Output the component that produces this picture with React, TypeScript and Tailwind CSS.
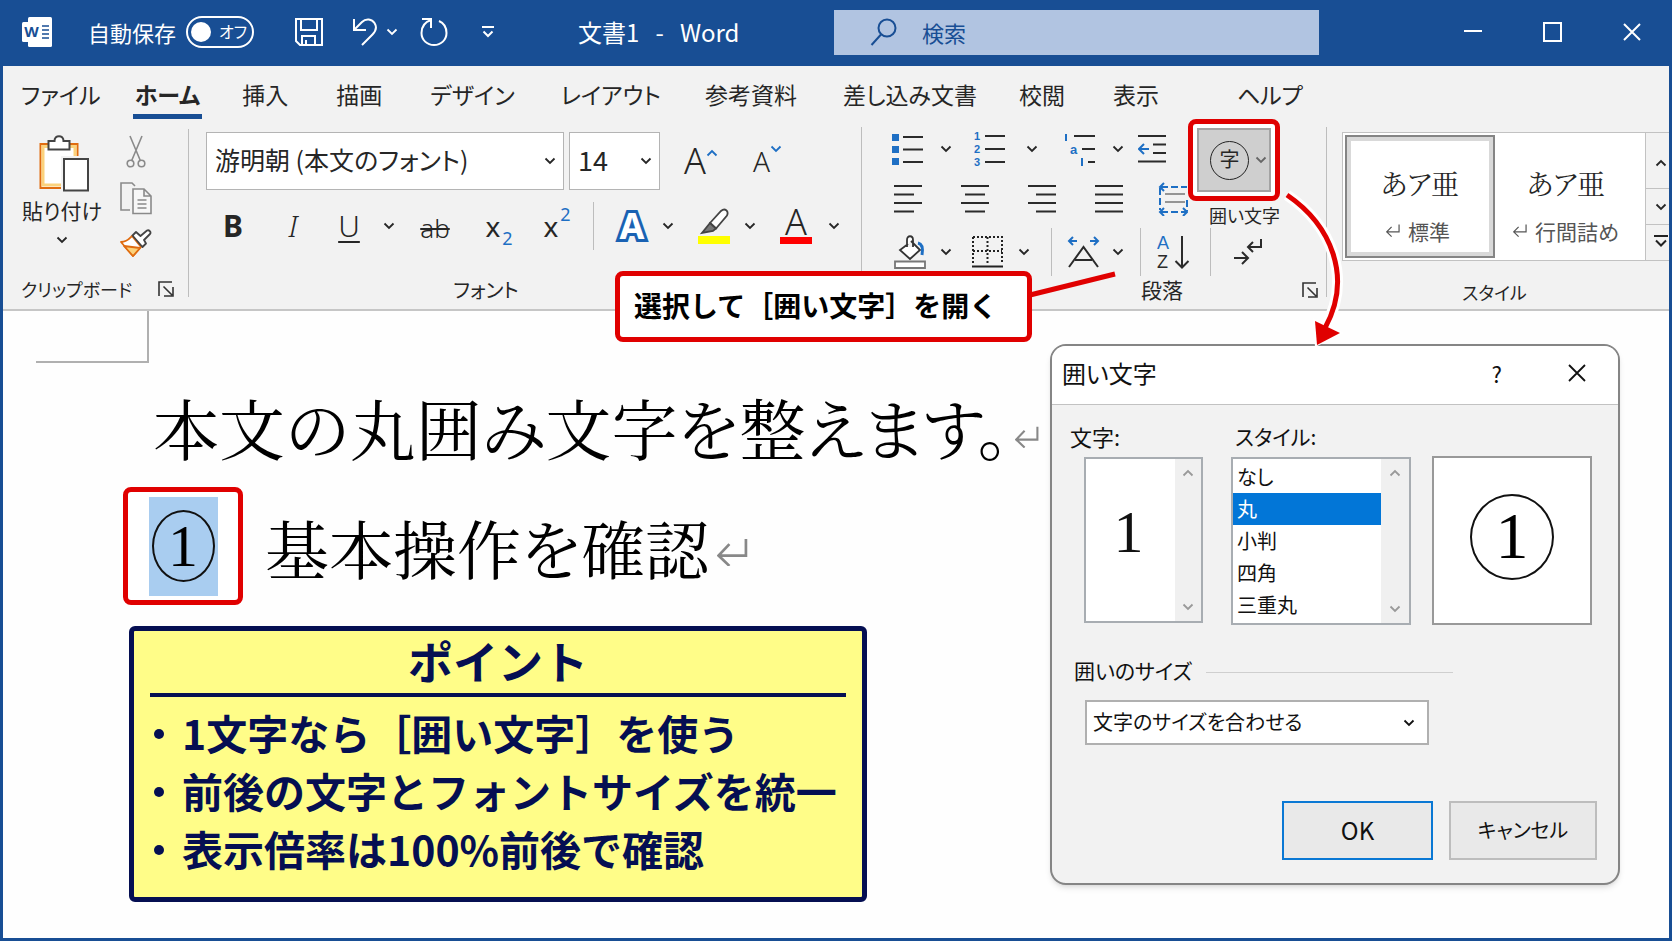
import { useState } from "react";
import type { ReactNode } from "react";

const TABS = [
  { label: "ファイル", gap: "ml-[18px]" },
  { label: "ホーム", gap: "ml-8" },
  { label: "挿入", gap: "ml-10" },
  { label: "描画", gap: "ml-12" },
  { label: "デザイン", gap: "ml-12" },
  { label: "レイアウト", gap: "ml-[46px]" },
  { label: "参考資料", gap: "ml-11" },
  { label: "差し込み文書", gap: "ml-[46px]" },
  { label: "校閲", gap: "ml-[42px]" },
  { label: "表示", gap: "ml-12" },
  { label: "ヘルプ", gap: "ml-[78px]" },
];

const STYLES = ["なし", "丸", "小判", "四角", "三重丸"];

const POINTS = ["1文字なら［囲い文字］を使う", "前後の文字とフォントサイズを統一", "表示倍率は100%前後で確認"];

function Chevron({ up = false, className = "" }: { up?: boolean; className?: string }) {
  return (
    <svg width="12" height="8" viewBox="0 0 12 8" fill="none" stroke="currentColor" strokeWidth="1.8" className={`shrink-0 ${className}`}>
      <path d={up ? "M1.5 6.5 6 2l4.5 4.5" : "M1.5 1.5 6 6l4.5-4.5"} />
    </svg>
  );
}

function ReturnMark({ className = "" }: { className?: string }) {
  return (
    <svg viewBox="0 0 30 28" fill="none" stroke="currentColor" strokeWidth="2.6" className={`shrink-0 ${className}`}>
      <path d="M28 1v16H2M12 6 1.5 17 12 27" />
    </svg>
  );
}

function Launcher() {
  return (
    <button aria-label="詳細設定">
      <svg width="16" height="16" viewBox="0 0 16 16" fill="none" stroke="#333" strokeWidth="1.6">
        <path d="M1 15V1h13M5.5 5.5 14 14M15 6v9H6" />
      </svg>
    </button>
  );
}

function Tool({ label, className = "", children }: { label: string; className?: string; children: ReactNode }) {
  return (
    <button aria-label={label} className={`flex shrink-0 items-center justify-center ${className}`}>
      {children}
    </button>
  );
}

function Separator({ className = "" }: { className?: string }) {
  return <div className={`w-px shrink-0 bg-[#bdbdbd] ${className}`} />;
}

function Lines({ rows }: { rows: [number, number][] }) {
  return (
    <svg width="30" height="30" viewBox="0 0 30 30" stroke="#2b2b2b" strokeWidth="2">
      {rows.map(([from, to], i) => (
        <path key={i} d={`M${from} ${2 + i * 8.5}H${to}`} />
      ))}
    </svg>
  );
}

function TitleBar() {
  return (
    <header className="flex h-[66px] items-center bg-[#184e94] pr-7 pb-0.5 pl-[19px] text-white">
      <svg width="30" height="32" viewBox="0 0 30 32" className="shrink-0">
        <rect x="6" y="1" width="24" height="30" rx="1.5" fill="#fff" />
        <rect x="0" y="6" width="18" height="20" rx="1.5" fill="#fff" />
        <path d="M20 10h7M20 14h7M20 18h7M20 22h7" stroke="#184e94" strokeWidth="1.6" />
        <text x="9.5" y="21" textAnchor="middle" fontSize="15" fontWeight="700" fontFamily="Noto Sans, sans-serif" fill="#184e94">W</text>
      </svg>
      <span className="ml-9 text-[22px] whitespace-nowrap">自動保存</span>
      <button role="switch" aria-checked="false" aria-label="自動保存" className="ml-2.5 flex h-8 w-[68px] shrink-0 items-center rounded-full border-2 border-white pl-[3px]">
        <span className="size-5 rounded-full bg-white" />
        <span className="ml-2 pb-0.5 text-base leading-none">オフ</span>
      </button>
      <Tool label="上書き保存" className="ml-10">
        <svg width="30" height="30" viewBox="0 0 30 30" fill="none" stroke="#fff" strokeWidth="2">
          <path d="M2 2h26v26H6l-4-4zM7 2v11h16V2M8 28v-9h13v9M12 28v-5" />
        </svg>
      </Tool>
      <Tool label="元に戻す" className="ml-7">
        <svg width="26" height="30" viewBox="0 0 26 30" fill="none" stroke="#fff" strokeWidth="2">
          <path d="M2 2v11h12M2 13 10 5c4-4 10-3 12.5 1s1.5 8-2 11.5L10 28" />
        </svg>
      </Tool>
      <Chevron className="ml-2" />
      <Tool label="やり直し" className="ml-[22px]">
        <svg width="28" height="30" viewBox="0 0 28 30" fill="none" stroke="#fff" strokeWidth="2">
          <path d="M2 2h9v9M11 3C5 5 1.5 10 1.5 16c0 7 5.5 12 12.5 12s12.5-5 12.5-12c0-5.5-3-10-7.5-12" />
        </svg>
      </Tool>
      <Tool label="クイック アクセス ツール バーのカスタマイズ" className="ml-8">
        <svg width="16" height="14" viewBox="0 0 16 14" fill="none" stroke="#fff" strokeWidth="2">
          <path d="M2 2h12M3.5 6.5 8 11l4.5-4.5" />
        </svg>
      </Tool>
      <h1 className="ml-[82px] w-[256px] shrink-0 text-2xl whitespace-pre">文書1   -   Word</h1>
      <label className="flex h-[45px] w-[485px] items-center bg-[#b1c4e1] pl-9 text-[#184e94]">
        <svg width="27" height="28" viewBox="0 0 27 28" fill="none" stroke="#184e94" strokeWidth="2">
          <circle cx="17" cy="10" r="8.5" />
          <path d="M11 16.5 1.5 27" />
        </svg>
        <input aria-label="検索" placeholder="検索" className="ml-[25px] min-w-0 flex-1 bg-transparent text-[22px] outline-none placeholder:text-[#184e94]" />
      </label>
      <div className="ml-auto flex items-center gap-[61px]">
        <Tool label="最小化">
          <svg width="18" height="18" viewBox="0 0 18 18" stroke="#fff" strokeWidth="2"><path d="M0 8h18" /></svg>
        </Tool>
        <Tool label="最大化">
          <svg width="19" height="20" viewBox="0 0 19 20" fill="none" stroke="#fff" strokeWidth="2"><path d="M1 1h17v18H1z" /></svg>
        </Tool>
        <Tool label="閉じる">
          <svg width="18" height="18" viewBox="0 0 18 18" stroke="#fff" strokeWidth="2"><path d="m1 1 16 16M17 1 1 17" /></svg>
        </Tool>
      </div>
    </header>
  );
}

function ClipboardGroup() {
  return (
    <section className="flex w-[185px] shrink-0 flex-col justify-between pt-3 pb-[5px]">
      <div className="flex pl-[19px]">
        <button className="flex w-20 flex-col items-center whitespace-nowrap">
          <svg width="50" height="57" viewBox="0 0 50 57" fill="none" className="ml-1">
            <path d="M1.5 9h37v44h-37z" fill="#fff" stroke="#e06c10" strokeWidth="2" />
            <path d="M4 11.5h32V50H4z" stroke="#fbd27c" strokeWidth="3" />
            <path d="M9.5 6h6c0-6.5 9-6.5 9 0h6v8.5h-21z" fill="#fff" stroke="#444" strokeWidth="2" />
            <path d="M22 21h28v36H22z" fill="#f2f2f2" />
            <path d="M25 24h24v31.5H25z" fill="#fff" stroke="#444" strokeWidth="2" />
          </svg>
          <span className="mt-1 text-[21px] leading-7">貼り付け</span>
          <Chevron className="mt-3" />
        </button>
        <div className="ml-[18px] flex flex-col items-center gap-3.5">
          <Tool label="切り取り">
            <svg width="20" height="33" viewBox="0 0 20 33" fill="none" stroke="#8a8a8a" strokeWidth="1.6">
              <path d="M4 1l10.5 25M16 1 5.5 26" />
              <circle cx="4.5" cy="28.5" r="3.3" />
              <circle cx="15.5" cy="28.5" r="3.3" />
            </svg>
          </Tool>
          <Tool label="コピー">
            <svg width="32" height="33" viewBox="0 0 32 33" fill="none" stroke="#8a8a8a" strokeWidth="1.6">
              <path d="M10 28H1V1h11l3 3" />
              <path d="M13 7h11l7 7v17.5H13zM24 7v7h7M17.5 18h9M17.5 22h9M17.5 26h9" fill="#f7f7f7" />
            </svg>
          </Tool>
          <Tool label="書式のコピー">
            <svg width="32" height="29" viewBox="0 0 32 29" fill="none" strokeWidth="1.8" strokeLinejoin="round">
              <path d="M1 13c6 0 8-3 11-6l9 11-8 9z" fill="#fff" stroke="#e06c10" />
              <path d="M4 17l16 2-7 8z" fill="#fbd27c" stroke="#e06c10" />
              <path d="M12.5 6.5 16 3l4.5 4L27 1.5c2-1 4.5 1.5 3 3.5l-6 6 2 3.5-3.5 3.5z" fill="#fff" stroke="#444" />
            </svg>
          </Tool>
        </div>
      </div>
      <div className="flex h-7 items-center justify-between pr-[14px] pb-0.5 pl-[18px] text-lg">
        <span>クリップボード</span>
        <Launcher />
      </div>
    </section>
  );
}

function FontGroup() {
  return (
    <section className="flex w-[672px] shrink-0 flex-col justify-between pt-[9px] pb-[5px]">
      <div>
        <div className="flex pl-[17px]">
          <label className="relative flex h-[58px] w-[358px] items-center">
            <select aria-label="フォント" className="size-full appearance-none border border-[#b4b4b4] bg-white pb-0.5 pl-2 text-[25px]">
              <option>游明朝 (本文のフォント)</option>
            </select>
            <Chevron className="pointer-events-none absolute right-2" />
          </label>
          <label className="relative ml-[5px] flex h-[58px] w-[91px] items-center">
            <select aria-label="フォント サイズ" className="size-full appearance-none border border-[#b4b4b4] bg-white pb-0.5 pl-2 text-[27px]">
              <option>14</option>
            </select>
            <Chevron className="pointer-events-none absolute right-2" />
          </label>
          <Tool label="フォント サイズの拡大" className="ml-6 font-['Noto_Sans',sans-serif] text-4xl font-light">
            A
            <Chevron up className="mb-4 text-[#1e6fc4]" />
          </Tool>
          <Tool label="フォント サイズの縮小" className="ml-[35px] font-['Noto_Sans',sans-serif] text-[28px] font-light">
            A
            <Chevron className="mb-6 text-[#1e6fc4]" />
          </Tool>
        </div>
        <div className="mt-3 flex h-12 items-center pl-6 font-['Noto_Sans',sans-serif] text-3xl leading-none">
          <Tool label="太字" className="w-10 font-bold">B</Tool>
          <Tool label="斜体" className="ml-5 w-10 font-light italic">I</Tool>
          <Tool label="下線" className="ml-4 w-10 font-light underline decoration-2 underline-offset-4">U</Tool>
          <Chevron className="ml-3.5" />
          <Tool label="取り消し線" className="ml-5 w-10 pt-1 text-[26px] font-light line-through decoration-2">ab</Tool>
          <Tool label="下付き" className="ml-6 w-10 text-[28px]">
            x<span className="mt-6 ml-0.5 text-lg leading-none text-[#1e6fc4]">2</span>
          </Tool>
          <Tool label="上付き" className="ml-[18px] w-10 text-[28px]">
            x<span className="mb-6 ml-0.5 text-lg leading-none text-[#1e6fc4]">2</span>
          </Tool>
          <Separator className="ml-4 h-12" />
          <Tool label="文字の効果" className="ml-[18px] w-10 text-4xl font-bold text-white [-webkit-text-stroke:6px_#1a62b3] [paint-order:stroke]">A</Tool>
          <Chevron className="ml-2.5" />
          <Tool label="蛍光ペンの色" className="ml-5 w-10">
            <svg width="32" height="36" viewBox="0 0 32 36" fill="none" stroke="#444" strokeWidth="1.8">
              <path d="M0 28h32v8H0z" fill="#ff0" stroke="none" />
              <path d="M12 15 23 3c4-3.5 8 0 6 4.500L18 20.500z" fill="#fff" />
              <path d="m12 15 6 5.500-3 2.500-11 2z" fill="#777" />
            </svg>
          </Tool>
          <Chevron className="ml-2.5" />
          <Tool label="フォントの色" className="ml-5 w-10 flex-col gap-px text-4xl leading-7 font-light">
            A
            <span className="h-[7px] w-8 bg-[#f00]" />
          </Tool>
          <Chevron className="ml-3" />
        </div>
      </div>
      <div className="h-7 pr-[78px] text-center text-[20px] leading-7">フォント</div>
    </section>
  );
}

function ParagraphGroup() {
  return (
    <section className="flex w-[464px] shrink-0 flex-col pb-[5px]">
      <div className="flex pl-[30px]">
        <div className="w-[296px] shrink-0">
          <div className="flex h-[50px] items-center pt-0.5">
            <Tool label="箇条書き">
              <svg width="32" height="32" viewBox="0 0 32 32" strokeWidth="2" stroke="#2b2b2b">
                <path d="M0 1h7v7H0zM0 13h7v7H0zM0 25h7v7H0z" fill="#1e6fc4" stroke="none" />
                <path d="M11 4h20M11 16.500h20M11 29h20" />
              </svg>
            </Tool>
            <Chevron className="ml-4" />
            <Tool label="段落番号" className="ml-[22px]">
              <svg width="32" height="38" viewBox="0 0 32 38" strokeWidth="2" stroke="#2b2b2b">
                <path d="M11 6h20M11 19h20M11 32h20" />
                <g fill="#1e6fc4" stroke="none" fontSize="11" fontWeight="700" fontFamily="Liberation Sans, sans-serif">
                  <text x="0" y="10">1</text>
                  <text x="0" y="23">2</text>
                  <text x="0" y="36">3</text>
                </g>
              </svg>
            </Tool>
            <Chevron className="ml-5" />
            <Tool label="アウトライン" className="ml-[26px]">
              <svg width="32" height="34" viewBox="0 0 32 34" strokeWidth="2" stroke="#2b2b2b">
                <path d="M10 4h21M18 17h13M24 30h7" />
                <path d="M2 2v7M18 26v8" stroke="#1e6fc4" />
                <text x="6" y="22" fill="#1e6fc4" stroke="none" fontSize="13" fontWeight="700" fontFamily="Liberation Sans, sans-serif">a</text>
              </svg>
            </Tool>
            <Chevron className="ml-4" />
            <Tool label="インデントを減らす" className="ml-3.5">
              <svg width="28" height="30" viewBox="0 0 28 30" strokeWidth="2" stroke="#2b2b2b" fill="none">
                <path d="M0 2h28M15 10.500h13M15 19h13M0 27.500h28" />
                <path d="M11 15H2M6 10l-5 5 5 5" stroke="#1e6fc4" />
              </svg>
            </Tool>
          </div>
          <div className="flex h-[52px] items-center gap-[37px] pl-0.5">
            <Tool label="左揃え"><Lines rows={[[0, 28], [0, 20], [0, 28], [0, 20]]} /></Tool>
            <Tool label="中央揃え"><Lines rows={[[0, 28], [4, 24], [0, 28], [4, 24]]} /></Tool>
            <Tool label="右揃え"><Lines rows={[[0, 28], [8, 28], [0, 28], [8, 28]]} /></Tool>
            <Tool label="両端揃え"><Lines rows={[[0, 28], [0, 28], [0, 28], [0, 28]]} /></Tool>
            <Tool label="均等割り付け" className="-ml-1">
              <svg width="30" height="34" viewBox="0 0 30 34" strokeWidth="2" fill="none" stroke="#1e6fc4">
                <path d="M3 5h26M2 6v22M29 18v11M3 30h26" strokeDasharray="7 3" />
                <path d="M6 1 2 5l4 4M6 26l-4 4 4 4M25 26l4 4-4 4" />
                <path d="M7 12h20M7 20h20" stroke="#777" strokeWidth="1.5" />
              </svg>
            </Tool>
          </div>
        </div>
        <div className="-mt-1 flex w-[92px] shrink-0 flex-col items-end">
          <div className="z-10 flex h-[82px] w-full rounded-lg border-[5px] border-[#e00000] bg-white p-1">
            <button aria-label="囲い文字" className="flex flex-1 items-center justify-end gap-1.5 border-2 border-[#a3a3a3] bg-[#cfcfcf] pr-0.5">
              <span className="flex size-[39px] items-center justify-center rounded-full border border-[#222] pb-0.5 text-[20px] leading-none">字</span>
              <Chevron className="text-[#666]" />
            </button>
          </div>
          <span className="mt-1 text-lg leading-5 whitespace-nowrap">囲い文字</span>
        </div>
      </div>
      <div className="flex h-[52px] items-center pt-0.5 pl-8">
        <Tool label="塗りつぶし">
          <svg width="32" height="34" viewBox="0 0 32 34" fill="none" stroke="#333" strokeWidth="1.8">
            <path d="M14 9 6 15l10 9 10-9-9-9M13 12V5c0-5 6-5 6 0v7" fill="#fff" />
            <path d="M24 8c5 1 5 6 4 12" stroke="#1e6fc4" strokeWidth="3" />
            <path d="M1 26.500h30V33H1z" stroke="#777" fill="#fff" />
          </svg>
        </Tool>
        <Chevron className="ml-3.5" />
        <Tool label="罫線" className="ml-5">
          <svg width="31" height="32" viewBox="0 0 31 32" fill="none" stroke="#222" strokeWidth="2">
            <path d="M1 1h29v27M1 1v27M15.500 1v27M1 15h29" strokeDasharray="2 2" />
            <path d="M0 30.500h31" />
          </svg>
        </Tool>
        <Chevron className="ml-[15px]" />
        <Separator className="ml-[21px] h-12" />
        <Tool label="拡張書式" className="ml-[15px]">
          <svg width="33" height="32" viewBox="0 0 33 32" fill="none" stroke="#2b2b2b" strokeWidth="2">
            <path d="M2 31 16.500 11 31 31M8 24h17" />
            <path d="M10 5H2M6 1 2 5l4 4M23 5h8M27 1l4 4-4 4" stroke="#1e6fc4" />
          </svg>
        </Tool>
        <Chevron className="ml-3" />
        <Separator className="ml-4 h-12" />
        <Tool label="並べ替え" className="ml-4">
          <svg width="33" height="40" viewBox="0 0 33 40" fill="none" stroke="#2b2b2b" strokeWidth="2">
            <g stroke="none" fontSize="18" fontFamily="Liberation Sans, sans-serif">
              <text x="0" y="17" fill="#1e6fc4">A</text>
              <text x="0" y="36" fill="#2b2b2b">Z</text>
            </g>
            <path d="M25 4v31M18.500 29l6.500 6.500 6.500-6.500" />
          </svg>
        </Tool>
        <Separator className="ml-5 h-12" />
        <Tool label="編集記号の表示" className="ml-[22px]">
          <svg width="30" height="28" viewBox="0 0 30 28" fill="none" stroke="#2b2b2b" strokeWidth="2">
            <path d="M28 1v8H16M20 4l-5 5 5 5M1 20h14M9 14l6 6-6 6" />
          </svg>
        </Tool>
      </div>
      <div className="flex h-7 items-center justify-end pr-2 text-[21px]">
        <span className="mr-[119px]">段落</span>
        <Launcher />
      </div>
    </section>
  );
}

function StylesGroup() {
  return (
    <section className="flex min-w-0 flex-1 flex-col justify-between pt-[9px] pb-[3px] pl-[15px]">
      <div className="flex h-[129px] border-y border-l border-[#c2c2c2] bg-white">
        <button className="m-0.5 flex w-[150px] shrink-0 flex-col items-center border-2 border-[#858585] pt-[30px] ring-4 ring-[#d9d9d9] ring-inset">
          <span className="font-['Noto_Serif_CJK_JP','Noto_Sans_CJK_JP',serif] text-[28px] leading-8">あア亜</span>
          <span className="mt-[18px] mr-1 flex items-center gap-2 text-[21px] leading-7 text-[#555]">
            <ReturnMark className="w-3.5" />
            標準
          </span>
        </button>
        <button className="flex min-w-0 flex-1 flex-col items-center pt-[34px] pr-2.5">
          <span className="font-['Noto_Serif_CJK_JP','Noto_Sans_CJK_JP',serif] text-[28px] leading-8">あア亜</span>
          <span className="mt-[18px] flex items-center gap-2 text-[21px] leading-7 whitespace-nowrap text-[#555]">
            <ReturnMark className="w-3.5" />
            行間詰め
          </span>
        </button>
        <div className="flex w-6 shrink-0 flex-col border-l border-[#c2c2c2] bg-[#f2f2f2]">
          <Tool label="前の行" className="h-14 border-b border-[#c2c2c2] pt-1"><Chevron up className="ml-1.5" /></Tool>
          <Tool label="次の行" className="h-9 border-b border-[#c2c2c2]"><Chevron className="ml-1.5" /></Tool>
          <Tool label="その他" className="flex-1">
            <svg width="14" height="14" viewBox="0 0 14 14" fill="none" stroke="#222" strokeWidth="2" className="mb-1 ml-1.5">
              <path d="M0 2h14M2 6.500l5 5 5-5" />
            </svg>
          </Tool>
        </div>
      </div>
      <div className="h-7 pr-[22px] text-center text-lg leading-7">スタイル</div>
    </section>
  );
}

function EnclosedOne({ className }: { className: string }) {
  return (
    <span className={`flex items-center justify-center rounded-[50%] border-2 border-[#111] font-['Liberation_Serif',serif] leading-none text-black ${className}`}>
      1
    </span>
  );
}

function EncloseDialog() {
  const [style, setStyle] = useState("丸");

  return (
    <div role="dialog" aria-label="囲い文字" className="absolute top-[344px] left-[1047px] w-[570px] overflow-hidden rounded-2xl border-2 border-[#858585] bg-[#f2f2f2] text-[#111] shadow-md">
      <div className="flex h-[59px] items-center border-b border-[#c2c2c2] bg-white pr-8 pb-1 pl-2.5">
        <h2 className="text-2xl">囲い文字</h2>
        <button aria-label="ヘルプ" className="ml-auto text-[22px]">?</button>
        <button aria-label="閉じる" className="ml-[66px]">
          <svg width="18" height="18" viewBox="0 0 18 18" stroke="#111" strokeWidth="1.8"><path d="m1 1 16 16M17 1 1 17" /></svg>
        </button>
      </div>
      <div className="flex items-start pt-[15px] pl-[18px] text-[21px]">
        <div className="w-[133px]">
          <label htmlFor="enclosed-char" className="block text-[22px] leading-8">文字:</label>
          <div className="mt-[5px] ml-[14px] flex h-[166px] border-2 border-[#a8adb2] bg-white">
            <input id="enclosed-char" defaultValue="1" className="min-w-0 flex-1 pr-1 pb-4 text-center font-['Liberation_Serif',serif] text-[60px] outline-none" />
            <div className="flex w-[26px] flex-col items-center justify-between bg-[#f0f0f0] py-2.5 text-[#999]">
              <Chevron up />
              <Chevron />
            </div>
          </div>
        </div>
        <div className="ml-7 w-[180px]">
          <span id="style-label" className="block pl-1 leading-8">スタイル:</span>
          <div className="mt-[5px] flex h-[168px] border-2 border-[#a8adb2] bg-white">
            <ul role="listbox" aria-labelledby="style-label" className="flex-1 pt-0.5 text-[20px] leading-8">
              {STYLES.map((s) => (
                <li
                  key={s}
                  role="option"
                  aria-selected={s === style}
                  onClick={() => setStyle(s)}
                  className={`h-8 pl-1 ${s === style ? "bg-[#0276d7] text-white" : ""}`}
                >
                  {s}
                </li>
              ))}
            </ul>
            <div className="flex w-7 flex-col items-center justify-between bg-[#f0f0f0] py-2.5 text-[#999]">
              <Chevron up />
              <Chevron />
            </div>
          </div>
        </div>
        <div className="mt-9 ml-[21px] flex h-[169px] w-40 items-center justify-center border-2 border-[#999] bg-white pb-2">
          <EnclosedOne className="h-[86px] w-[84px] pb-0.5 text-[66px]" />
        </div>
      </div>
      <div className="mt-[29px] flex items-center gap-3.5 pl-[22px] text-[21px] leading-8">
        <label htmlFor="enclosure-size">囲いのサイズ</label>
        <span className="mt-1 h-px w-[247px] bg-[#cfcfcf]" />
      </div>
      <div className="relative mt-3.5 ml-[33px] flex h-[45px] w-[344px] items-center">
        <select id="enclosure-size" className="size-full appearance-none border-2 border-[#b0b0b0] bg-white pb-0.5 pl-1.5 text-[20px]">
          <option>文字のサイズを合わせる</option>
        </select>
        <Chevron className="pointer-events-none absolute right-3.5" />
      </div>
      <div className="mt-14 mb-[23px] flex justify-end gap-4 pr-[21px]">
        <button className="h-[59px] w-[151px] border-2 border-[#0a78d4] bg-[#e9e9e9] pb-0.5 text-2xl">OK</button>
        <button className="h-[59px] w-[148px] border-2 border-[#bdbdbd] bg-[#e9e9e9] pb-0.5 text-[20px]">キャンセル</button>
      </div>
    </div>
  );
}

export default function App() {
  const [tab, setTab] = useState("ホーム");

  return (
    <div className="relative flex min-h-screen flex-col overflow-hidden border-x-[3px] border-b-[3px] border-[#184e94] bg-[#fefefe] font-['Noto_Sans_CJK_JP',sans-serif] text-[#262626] [font-feature-settings:'palt']">
      <TitleBar />
      <div className="border-b-2 border-[#c6c6c6] bg-[#f2f2f2]">
        <nav className="flex h-[57px] items-start pt-3.5 text-[23px] leading-7 whitespace-nowrap">
          {TABS.map(({ label, gap }) => (
            <button
              key={label}
              onClick={() => setTab(label)}
              className={`border-b-[5px] pb-1.5 ${gap} ${tab === label ? "border-[#184e94] px-0.5 font-bold" : "border-transparent"}`}
            >
              {label}
            </button>
          ))}
        </nav>
        <div className="flex h-[186px]">
          <ClipboardGroup />
          <Separator className="mt-1.5 mb-3" />
          <FontGroup />
          <Separator className="mt-1 mb-3" />
          <ParagraphGroup />
          <Separator className="mt-1 mb-3" />
          <StylesGroup />
        </div>
      </div>

      <main>
        <div className="ml-[33px] h-[52px] w-[113px] border-r-2 border-b-2 border-[#b0b0b0]" />
        <div className="flex items-center pt-4 pl-[150px] font-['Noto_Serif_CJK_JP','Noto_Sans_CJK_JP',serif] text-[66px] leading-[96px] whitespace-nowrap text-black">
          本文の丸囲み文字を整えます。
          <ReturnMark className="mt-5 ml-1 w-6 text-[#888]" />
        </div>
        <div className="mt-3 flex items-center pl-[120px]">
          <div className="flex h-[118px] w-[120px] shrink-0 items-center justify-center rounded-lg border-[5px] border-[#e00000] bg-white">
            <mark className="flex h-[99px] w-[69px] items-center justify-center bg-[#a9cdf0]">
              <EnclosedOne className="h-[72px] w-[63px] text-[60px]" />
            </mark>
          </div>
          <div className="flex items-center pl-[22px] font-['Noto_Serif_CJK_JP','Noto_Sans_CJK_JP',serif] text-[64px] leading-[96px] whitespace-nowrap text-black">
            基本操作を確認
            <ReturnMark className="mt-3 ml-2 w-[31px] text-[#888]" />
          </div>
        </div>
        <section className="mt-[21px] mb-9 ml-[126px] w-[738px] rounded-md border-[5px] border-[#050f52] bg-[#fffd88] px-4 pb-5 font-bold whitespace-nowrap text-[#050f52] [font-feature-settings:normal]">
          <h2 className="border-b-4 border-[#050f52] pb-0.5 text-center text-[45px] leading-[60px]">ポイント</h2>
          <ul className="mt-1.5 text-[41px] leading-[58px]">
            {POINTS.map((p) => (
              <li key={p} className="flex items-center gap-[18px] pl-1">
                <span className="mt-1 size-2.5 rounded-full bg-[#050f52]" />
                {p}
              </li>
            ))}
          </ul>
        </section>
      </main>

      <EncloseDialog />

      <p className="absolute top-[271px] left-[612px] flex h-[71px] w-[417px] items-center rounded-lg border-[5px] border-[#e00000] bg-white pb-1 pl-3.5 text-[28px] font-bold whitespace-nowrap text-black [font-feature-settings:normal]">
        選択して［囲い文字］を開く
      </p>
      <svg width="320" height="170" viewBox="0 0 320 170" fill="none" className="pointer-events-none absolute top-[185px] left-[1025px]">
        <path d="M2 110 87 89" stroke="#e00000" strokeWidth="5" />
        <path d="M259 10c44 30 66 82 38 133" stroke="#fff" strokeWidth="11" />
        <path d="M285 133l2 29 29-14z" fill="#fff" />
        <path d="M259 10c44 30 66 82 38 133" stroke="#e00000" strokeWidth="5" />
        <path d="M287 136l2 24 23-12z" fill="#e00000" />
      </svg>
    </div>
  );
}
